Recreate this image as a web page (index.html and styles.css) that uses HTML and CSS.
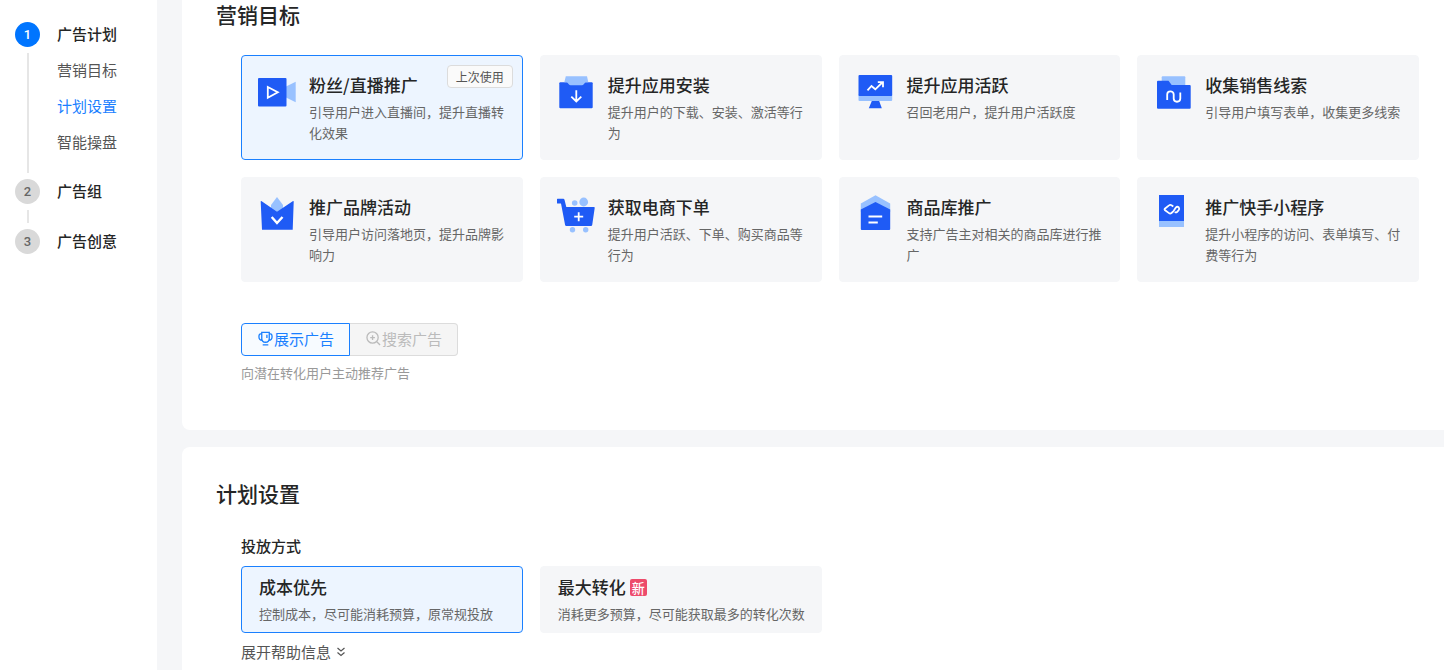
FILE: index.html
```html
<!DOCTYPE html>
<html lang="zh-CN">
  <head>
    <meta charset="utf-8">
    <title>广告计划</title>
    <link rel="stylesheet" href="styles.css">
  </head>

  <body>
    <nav class="sidebar">
      <ol class="steps">
        <li class="step active">
          <div class="step-mark"><span class="step-num">1</span></div>
          <div class="step-body">
            <a class="step-title" href="#plan">广告计划</a>
            <a class="step-link" href="#goal">营销目标</a>
            <a class="step-link current" href="#setting">计划设置</a>
            <a class="step-link" href="#smart">智能操盘</a>
          </div>
        </li>
        <li class="step">
          <div class="step-mark"><span class="step-num">2</span></div>
          <div class="step-body"><a class="step-title" href="#group">广告组</a></div>
        </li>
        <li class="step">
          <div class="step-mark"><span class="step-num">3</span></div>
          <div class="step-body"><a class="step-title" href="#creative">广告创意</a></div>
        </li>
      </ol>
    </nav>

    <main class="content">
      <section class="panel" id="goal">
        <h2>营销目标</h2>
        <div class="panel-body">
          <div class="cards">
            <button type="button" class="card selected" aria-pressed="true">
              <svg class="card-icon" viewBox="0 0 40 40">
                <path class="light" d="M29 12.5L38.7 7.7V28.3L29 23.5z"/>
                <rect class="dark" x="1" y="4" width="28.5" height="28.5" rx="1"/>
                <path class="line" d="M10.8 13L20.8 18.3L10.8 23.8z"/>
              </svg>
              <span class="card-text">
                <span class="card-title">粉丝/直播推广</span>
                <span class="card-desc">引导用户进入直播间，提升直播转化效果</span>
              </span>
              <span class="last-used">上次使用</span>
            </button>
            <button type="button" class="card">
              <svg class="card-icon" viewBox="0 0 40 40">
                <rect class="dark" x="3.3" y="8.3" width="33.4" height="26" rx="1"/>
                <path class="light" d="M9.8 2.3H31L32.3 8.3H29.5L27.5 10.6Q27 11.3 26 11.3H14.5Q13.5 11.3 13 10.6L11 8.3H8.3z"/>
                <path class="line" d="M20.3 16.3V27.3M15.3 22.6L20.3 27.4L25.3 22.6"/>
              </svg>
              <span class="card-text">
                <span class="card-title">提升应用安装</span>
                <span class="card-desc">提升用户的下载、安装、激活等行为</span>
              </span>
            </button>
            <button type="button" class="card">
              <svg class="card-icon" viewBox="0 0 40 40">
                <rect class="light" x="3.5" y="20" width="33.7" height="7" rx="1"/>
                <rect class="dark" x="3.5" y="1" width="33.7" height="21" rx="1"/>
                <path class="dark" d="M16.8 27H24.2L26.8 34.3H13.8z"/>
                <path class="line" d="M12.5 16.3L16.5 12L20.3 15.3L27.3 8.5M22.8 8.2H28V13.3"/>
              </svg>
              <span class="card-text">
                <span class="card-title">提升应用活跃</span>
                <span class="card-desc">召回老用户，提升用户活跃度</span>
              </span>
            </button>
            <button type="button" class="card">
              <svg class="card-icon" viewBox="0 0 40 40">
                <rect class="light" x="8.7" y="2.3" width="23.6" height="14" rx="1"/>
                <path class="dark" d="M5 6.7H15.5L18.7 11H36.7Q37.7 11 37.7 12V33.7Q37.7 34.7 36.7 34.7H5Q4 34.7 4 33.7V7.7Q4 6.7 5 6.7z"/>
                <path class="line" d="M14.2 26V20.5C14.2 16.2 20.7 16.2 20.7 20.5V24.5C20.7 28.8 27.3 28.8 27.3 24.5V18.5"/>
              </svg>
              <span class="card-text">
                <span class="card-title">收集销售线索</span>
                <span class="card-desc">引导用户填写表单，收集更多线索</span>
              </span>
            </button>
            <button type="button" class="card">
              <svg class="card-icon" viewBox="0 0 40 40">
                <path class="light" d="M20 1L26 9V16H14V9z"/>
                <path class="dark" d="M3.7 5.8Q3.6 4.6 4.7 5.2L20 15.7L35.7 5.2Q36.8 4.6 36.7 5.8L35.7 33.7H5z"/>
                <path class="line thick" d="M14.7 21L20 27L25.5 21"/>
              </svg>
              <span class="card-text">
                <span class="card-title">推广品牌活动</span>
                <span class="card-desc">引导用户访问落地页，提升品牌影响力</span>
              </span>
            </button>
            <button type="button" class="card">
              <svg class="card-icon" viewBox="0 0 40 40">
                <circle class="light" cx="18.7" cy="7" r="2.8"/>
                <circle class="light" cx="27.7" cy="6" r="4.4"/>
                <circle class="light" cx="16.5" cy="33.7" r="2.7"/>
                <circle class="light" cx="29.7" cy="33.7" r="2.7"/>
                <path class="dark" d="M1.5 2.7H7.2Q8.2 2.7 8.5 3.7L10.3 11H38Q38.9 11 38.7 12L36.2 29Q36 30 35 30H10.3Q9.3 30 9.1 29L5 7.5H1.5Q1 7.5 1 7V3.2Q1 2.7 1.5 2.7z"/>
                <path class="line" d="M22.7 16.2V25.2M18.2 20.7H27.2"/>
              </svg>
              <span class="card-text">
                <span class="card-title">获取电商下单</span>
                <span class="card-desc">提升用户活跃、下单、购买商品等行为</span>
              </span>
            </button>
            <button type="button" class="card">
              <svg class="card-icon" viewBox="0 0 40 40">
                <path class="light" d="M20.5 -0.7L35.2 7.5V16H5.8V7.5z"/>
                <path class="dark" d="M20.5 6L35.2 13.6V33Q35.2 34 34.2 34H6.8Q5.8 34 5.8 33V13.6z"/>
                <path class="line" d="M13.5 20.5H27.2M13.5 26.5H22.8"/>
              </svg>
              <span class="card-text">
                <span class="card-title">商品库推广</span>
                <span class="card-desc">支持广告主对相关的商品库进行推广</span>
              </span>
            </button>
            <button type="button" class="card">
              <svg class="card-icon" viewBox="0 0 40 40">
                <rect class="light" x="6" y="23" width="25" height="8"/>
                <rect class="dark" x="6" y="-1" width="25" height="26"/>
                <path class="line" d="M20.3 10.4L18.5 9.2Q17.2 8.4 16 9.4L11.8 12.7Q11.2 13.3 11.8 14L16 17.1Q17.2 18 18.5 17L20.5 15.2L22.8 11.6Q24.3 10 25.8 11.4Q26.8 12.8 25.5 14.5L24 16Q23 16.8 21.8 16"/>
              </svg>
              <span class="card-text">
                <span class="card-title">推广快手小程序</span>
                <span class="card-desc">提升小程序的访问、表单填写、付费等行为</span>
              </span>
            </button>
          </div>

          <div class="segment">
            <button type="button" class="segment-btn on">
              <svg class="segment-icon" viewBox="0 0 16 16">
                <path d="M4 1.5H12V8Q12 12 8 12Q4 12 4 8zM4 3H2.8Q1 3 1 6Q1 9.5 4.5 10M12 3H13.2Q15 3 15 6Q15 9.5 11.5 10M9.5 4V7.5M5 14.7H11"/>
              </svg>
              展示广告
            </button>
            <button type="button" class="segment-btn" disabled>
              <svg class="segment-icon" viewBox="0 0 16 16">
                <circle cx="7" cy="7" r="6"/>
                <path d="M11.5 11.5L15 15M7 4.5V9.5M4.5 7H9.5"/>
              </svg>
              搜索广告
            </button>
          </div>
          <p class="hint">向潜在转化用户主动推荐广告</p>
        </div>
      </section>

      <section class="panel setting" id="setting">
        <h2>计划设置</h2>
        <div class="panel-body">
          <h3>投放方式</h3>
          <div class="cards">
            <button type="button" class="card small selected" aria-pressed="true">
              <span class="card-text">
                <span class="card-title">成本优先</span>
                <span class="card-desc">控制成本，尽可能消耗预算，原常规投放</span>
              </span>
            </button>
            <button type="button" class="card small">
              <span class="card-text">
                <span class="card-title">最大转化<span class="new">新</span></span>
                <span class="card-desc">消耗更多预算，尽可能获取最多的转化次数</span>
              </span>
            </button>
          </div>
          <button type="button" class="help">
            展开帮助信息
            <svg class="help-icon" viewBox="0 0 10 10">
              <path d="M1.5 1L5 4L8.5 1M1.5 5.5L5 8.5L8.5 5.5"/>
            </svg>
          </button>
        </div>
      </section>
    </main>
  </body>
</html>
```

FILE: styles.css
```css
* {
  box-sizing: border-box;
}

body {
  margin: 0;
  min-height: 100vh;
  display: flex;
  background: #f5f6f8;
  color: #252626;
  font-family: "Noto Sans CJK SC", sans-serif;
  font-size: 15px;
}

button {
  margin: 0;
  font: inherit;
  color: inherit;
  cursor: pointer;
}

a {
  text-decoration: none;
}

/* sidebar */

.sidebar {
  flex: none;
  width: 157px;
  padding: 22px 15px;
  background: #fff;
}

.steps {
  margin: 0;
  padding: 0;
  list-style: none;
}

.step {
  display: flex;
  gap: 17px;
  min-height: 50px;
}

.step-mark {
  display: flex;
  flex-direction: column;
  align-items: center;
}

.step-num {
  width: 25px;
  height: 25px;
  border-radius: 50%;
  background: #d9d9d9;
  color: #666;
  font-family: Roboto, sans-serif;
  font-size: 13px;
  font-weight: 500;
  line-height: 25px;
  text-align: center;
}

.step.active .step-num {
  background: #0075ff;
  color: #fff;
}

.step:not(:last-child) .step-mark::after {
  content: "";
  flex: 1;
  width: 2px;
  margin: 6px 0;
  background: #e6e6e6;
}

.step-body {
  display: flex;
  flex-direction: column;
}

.step.active .step-body {
  padding-bottom: 19px;
}

.step-title {
  color: #252626;
  font-weight: 500;
  line-height: 24px;
}

.step.active .step-title {
  margin-bottom: 6px;
}

.step-link {
  color: #555;
  line-height: 36px;
}

.step-link.current {
  color: #1a80ff;
}

/* panels */

.content {
  flex: 1;
  min-width: 0;
  margin-left: 25px;
  display: flex;
  flex-direction: column;
  gap: 17px;
}

.panel {
  padding: 0 25px 47px 34px;
  border-radius: 0 0 0 8px;
  background: #fff;
}

.panel.setting {
  flex: 1;
  padding-top: 32px;
  padding-bottom: 0;
  border-radius: 8px 0 0 0;
}

.panel-body {
  padding-left: 25px;
}

h2 {
  margin: 0 0 26px;
  font-size: 21px;
  font-weight: 500;
  line-height: 29px;
}

h3 {
  margin: 0 0 9px;
  font-size: 15px;
  font-weight: 500;
  line-height: 23px;
}

/* cards */

.cards {
  display: grid;
  grid-template-columns: repeat(4, 1fr);
  gap: 17px;
}

.card {
  position: relative;
  display: flex;
  align-items: flex-start;
  gap: 12px;
  padding: 17px 15px 16px;
  border: 1px solid #f5f6f8;
  border-radius: 4px;
  background: #f5f6f8;
  text-align: left;
}

.card.small {
  padding: 8px 12px 8px 17px;
}

.card.selected {
  border-color: #1a80ff;
  background: #edf5ff;
}

.card-icon {
  flex: none;
  width: 40px;
  height: 40px;
  margin-top: 1px;
  overflow: visible;
}

.dark {
  fill: #1f5bf5;
}

.light {
  fill: #98c1ff;
}

.line {
  fill: none;
  stroke: #fff;
  stroke-width: 1.8;
}

.line.thick {
  stroke-width: 2.4;
}

.card-text {
  flex: 1;
  min-width: 0;
  display: flex;
  flex-direction: column;
  gap: 4px;
}

.card-title {
  display: flex;
  align-items: center;
  gap: 4px;
  font-size: 17px;
  font-weight: 500;
  line-height: 24px;
}

.card-desc {
  color: #666;
  font-size: 13px;
  line-height: 21px;
}

.last-used {
  position: absolute;
  top: 9px;
  right: 9px;
  padding: 0 8px;
  border: 1px solid #dcdcdc;
  border-radius: 4px;
  background: #fafafa;
  color: #555;
  font-size: 12px;
  line-height: 21px;
}

.new {
  width: 17px;
  border-radius: 2px;
  background: #ed4b6b;
  color: #fff;
  font-size: 13px;
  line-height: 17px;
  text-align: center;
}

/* ad type */

.segment {
  display: flex;
  margin-top: 41px;
}

.segment-btn {
  display: flex;
  align-items: center;
  gap: 1px;
  padding: 0 15px 2px 16px;
  border: 1px solid #1a80ff;
  border-radius: 4px 0 0 4px;
  background: #f7fbff;
  color: #1a80ff;
  line-height: 29px;
}

.segment-btn:disabled {
  border-color: #dcdcdc;
  border-left: 0;
  border-radius: 0 4px 4px 0;
  background: #f5f5f5;
  color: #bbb;
  cursor: not-allowed;
}

.segment-icon {
  width: 15px;
  height: 15px;
  fill: none;
  stroke: currentColor;
  stroke-width: 1.4;
}

.hint {
  margin: 6px 0 0;
  color: #999;
  font-size: 13px;
  line-height: 21px;
}

.help {
  display: flex;
  align-items: center;
  gap: 5px;
  margin-top: 8px;
  padding: 0;
  border: 0;
  background: none;
  color: #555;
  line-height: 22px;
}

.help-icon {
  width: 10px;
  height: 10px;
  fill: none;
  stroke: currentColor;
  stroke-width: 1.2;
}
```
